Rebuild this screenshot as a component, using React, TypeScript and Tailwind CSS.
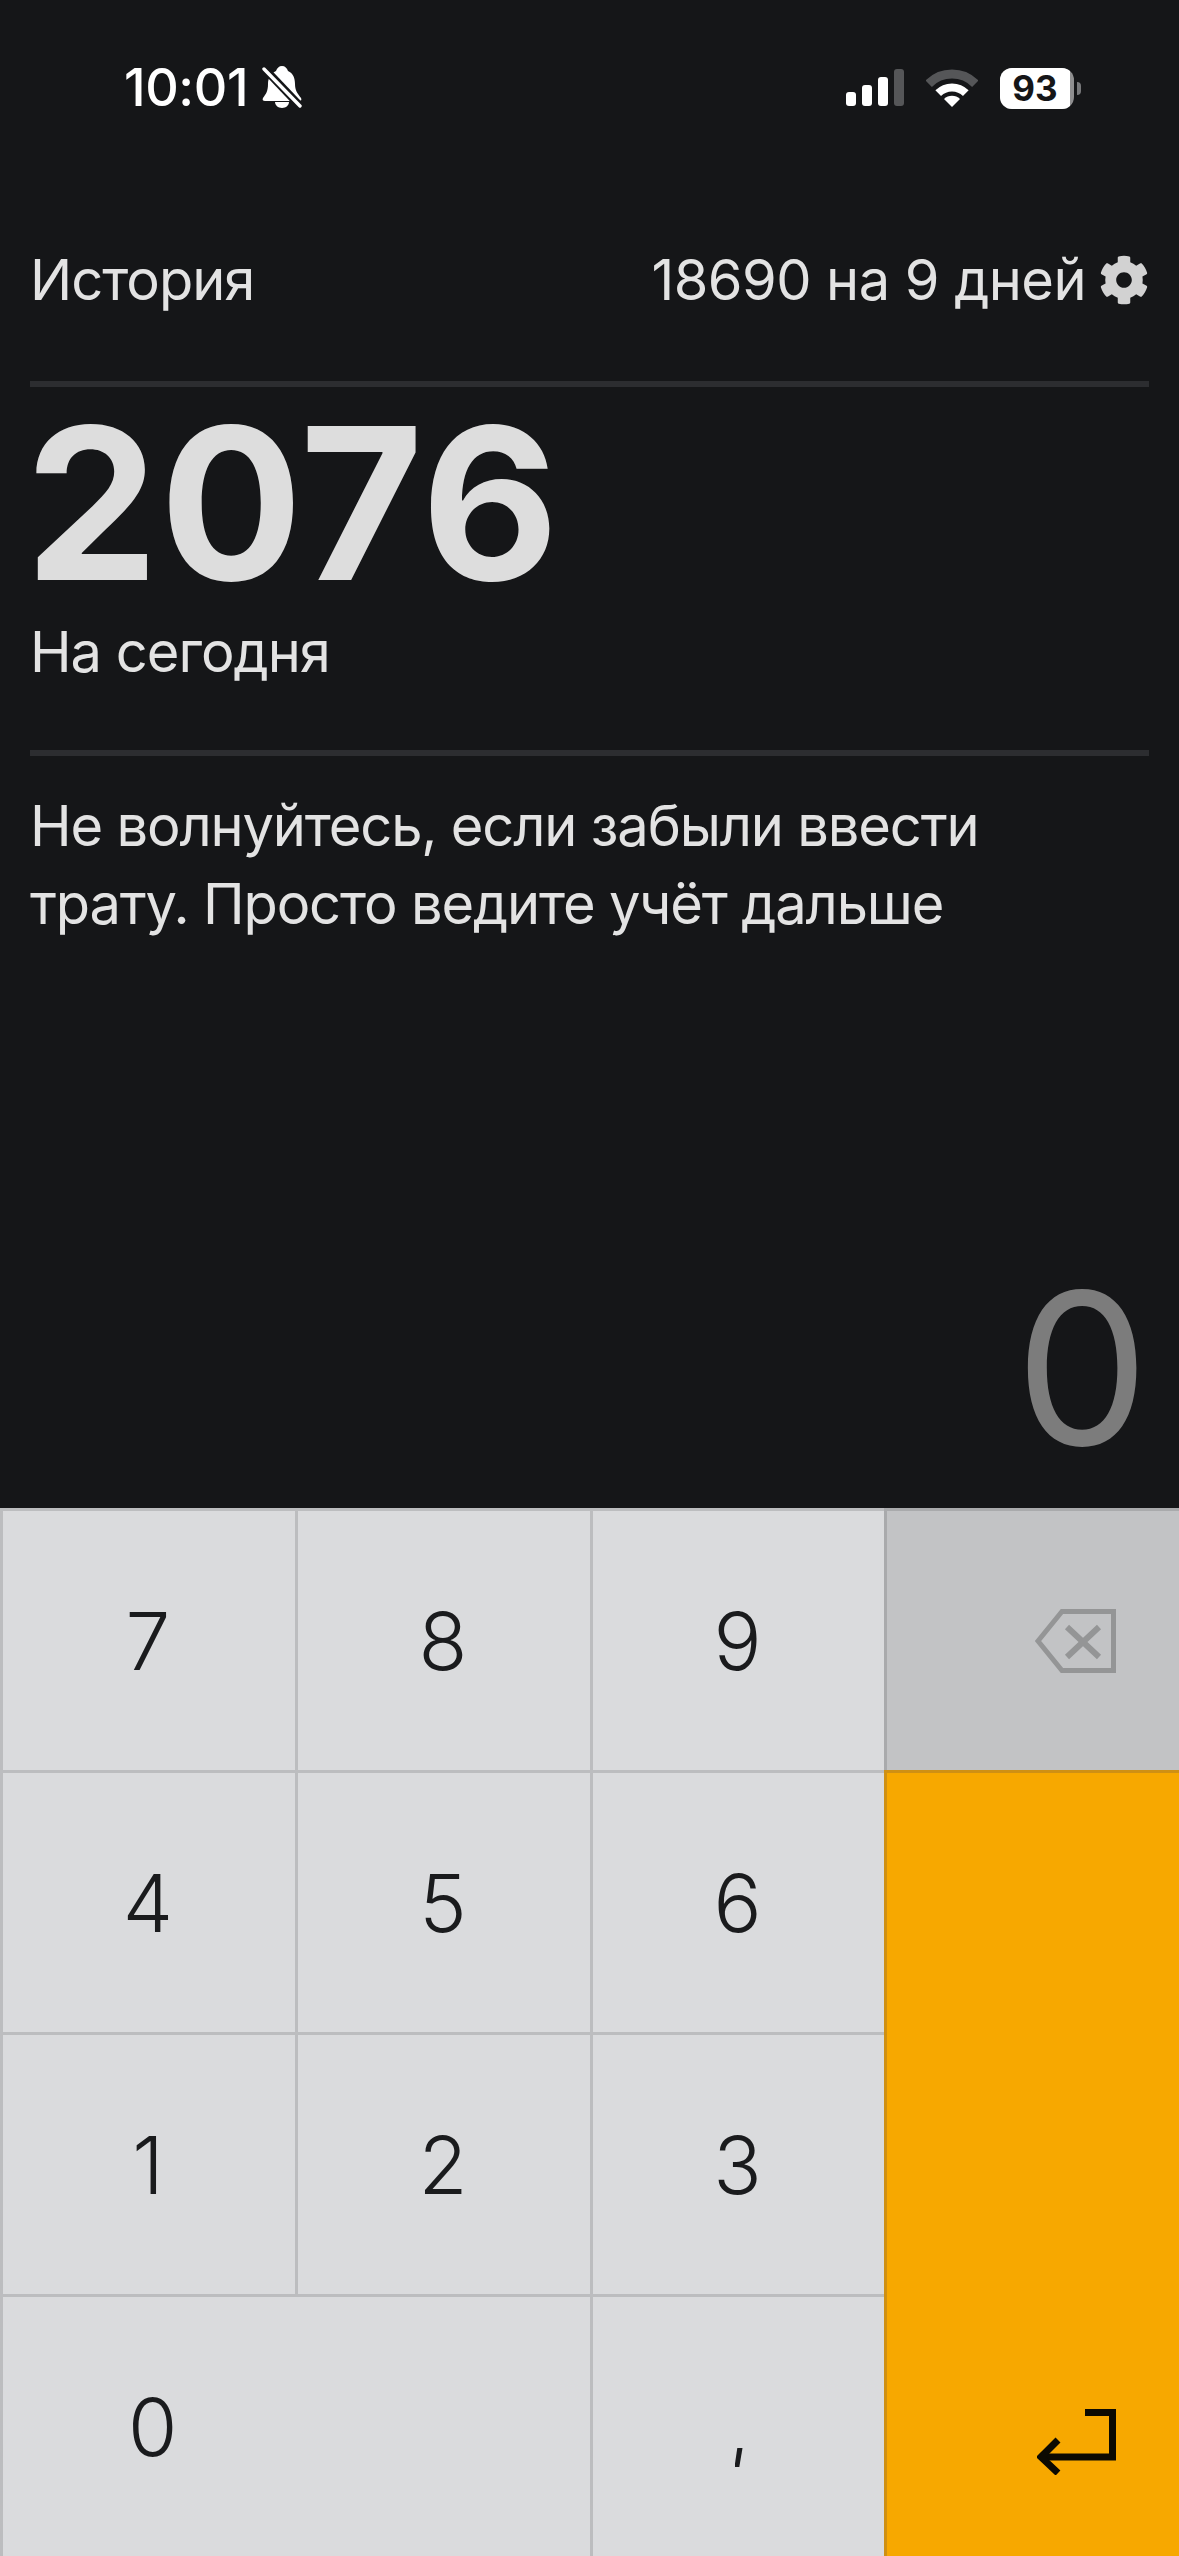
import React from "react";
import { FaCog } from "react-icons/fa";

const Key: React.FC<{ label: string; className?: string }> = ({ label, className = "border-r-[3px]" }) => (
  <div
    className={`flex items-center justify-center pr-[2px] bg-[#dadbdd] border-t-[3px] border-[#bcbdbf] text-[#1a1b1d] text-[80px] font-[350] leading-none ${className}`}
  >
    {label}
  </div>
);

const BellOff = () => (
  <svg width="40" height="42" viewBox="0 0 40 42" className="ml-[14px] mt-[-2px]">
    <path
      d="M20 0c3 0 5 2 6 5 5 2 7 7 7 13 0 6 2 9 6 14 1 2 0 3-2 3H3c-2 0-3-1-2-3 3-4 5-7 5-14 0-6 3-11 8-13 1-3 3-5 6-5z"
      fill="#fff"
    />
    <path d="M13 36h14c0 3-3 6-7 6s-7-3-7-6z" fill="#fff" />
    <path d="M-1 -1L39 41" stroke="#151618" strokeWidth="8" />
    <path d="M2 3L38 40" stroke="#fff" strokeWidth="3.4" strokeLinecap="round" />
  </svg>
);

const Signal = () => (
  <svg width="58" height="38" viewBox="0 0 58 38">
    <rect x="0" y="23" width="10" height="14" rx="3" fill="#fff" />
    <rect x="16" y="16" width="10" height="21" rx="3" fill="#fff" />
    <rect x="32" y="8" width="10" height="29" rx="3" fill="#fff" />
    <rect x="48" y="0" width="10" height="37" rx="3" fill="#555658" />
  </svg>
);

const Wifi = () => (
  <svg width="52" height="38" viewBox="0 0 52 38">
    <path d="M2.7 14.7A33 33 0 0 1 49.3 14.7" fill="none" stroke="#555658" strokeWidth="9" />
    <path d="M12.2 24.2A19.5 19.5 0 0 1 39.8 24.2" fill="none" stroke="#fff" strokeWidth="8" />
    <path d="M26 38L18 30A11.5 11.5 0 0 1 34 30Z" fill="#fff" />
  </svg>
);

const Battery = () => (
  <div className="flex items-center">
    <div className="w-[74px] h-[41px] rounded-[12px] overflow-hidden flex bg-[#8f8f90]">
      <div className="w-[70px] h-full bg-white flex items-center justify-center text-[#151618] text-[35px] font-bold leading-none">
        93
      </div>
    </div>
    <div className="w-[4px] h-[13px] ml-[3px] rounded-r-[4px] bg-[#77787a]" />
  </div>
);

const Backspace = () => (
  <svg width="81" height="64" viewBox="0 0 81 64" className="ml-[85px]">
    <path d="M3 32L27 2.5H78.5V61.5H27Z" fill="none" stroke="#949596" strokeWidth="5" />
    <path d="M32 18L64 48M64 18L32 48" stroke="#949596" strokeWidth="6" />
  </svg>
);

const Enter = () => (
  <svg width="80" height="66" viewBox="0 0 80 66">
    <path d="M48 3.5H75.5V48H5" fill="none" stroke="#0c0a02" strokeWidth="7" />
    <path d="M21 31L4 48L21 64" fill="none" stroke="#0c0a02" strokeWidth="7" />
  </svg>
);

export default function App() {
  return (
    <div
      className="w-[1179px] h-[2556px] bg-[#151618] flex flex-col overflow-hidden text-[#e3e3e3]"
      style={{ fontFamily: "Inter, 'Noto Sans', sans-serif" }}
    >
      <div className="h-[230px] flex items-start justify-between pt-[56px] pl-[124px] pr-[98px] shrink-0">
        <div className="flex items-center text-white text-[52px] font-medium leading-[64px] tracking-[-0.4px]">
          10:01
          <BellOff />
        </div>
        <div className="flex items-center gap-[22px] h-[64px]">
          <Signal />
          <Wifi />
          <Battery />
        </div>
      </div>

      <div className="h-[151px] shrink-0 flex items-start justify-between pl-[30px] pr-[30px] text-[56px] font-normal leading-[100px]">
        <span className="tracking-[-1px]">История</span>
        <span className="flex items-center tracking-[-0.55px]">
          18690 на 9 дней
          <FaCog className="w-[50px] h-[50px] ml-[13px] text-[#d2d2d2]" />
        </span>
      </div>

      <div className="h-[6px] mx-[30px] bg-[#2c2d30] shrink-0" />

      <div className="pl-[25px] text-[212px] font-bold leading-[216px] tracking-[1.3px] text-[#dddddd] shrink-0 mt-[8px]">
        2076
      </div>
      <div className="pl-[30px] text-[56px] font-normal leading-[80px] tracking-[-1px] shrink-0 mt-[1px]">
        На сегодня
      </div>

      <div className="h-[6px] mx-[30px] mt-[58px] bg-[#2c2d30] shrink-0" />

      <div className="pl-[30px] pr-[30px] mt-[31px] text-[56px] font-normal leading-[78px] tracking-[-1.15px] shrink-0">
        <div>Не волнуйтесь, если забыли ввести</div>
        <div>трату. Просто ведите учёт дальше</div>
      </div>

      <div className="flex-1 flex items-end justify-end pr-[30px] pb-[34px] text-[#7c7c7c] text-[212px] font-normal leading-none">
        0
      </div>

      <div className="h-[1048px] shrink-0 grid grid-cols-[298px_295px_291px_295px] grid-rows-[262px_262px_262px_262px]">
        <Key label="7" className="border-l-[3px] border-r-[3px]" />
        <Key label="8" />
        <Key label="9" className="" />
        <div className="flex items-center justify-center bg-[#c2c3c5] border-t-[3px] border-l-[3px] border-[#a9aaac]">
          <Backspace />
        </div>

        <Key label="4" className="border-l-[3px] border-r-[3px]" />
        <Key label="5" />
        <Key label="6" className="" />
        <div className="row-span-3 bg-[#f7a800] border-t-[3px] border-l-[3px] border-[#cf9013] flex items-end justify-center pb-[81px] pl-[88px]">
          <Enter />
        </div>

        <Key label="1" className="border-l-[3px] border-r-[3px]" />
        <Key label="2" />
        <Key label="3" className="" />

        <div className="col-span-2 flex items-center bg-[#dadbdd] border-t-[3px] border-l-[3px] border-r-[3px] border-[#bcbdbf] text-[#1a1b1d] text-[80px] font-[350] leading-none pl-[125px]">
          0
        </div>
        <div className="flex items-center justify-center bg-[#dadbdd] border-t-[3px] border-[#bcbdbf]">
          <span className="w-[8px] h-[19px] mt-[62px] bg-[#1a1b1d] [clip-path:polygon(35%_0,100%_0,60%_100%,0_100%)]" />
        </div>
      </div>
    </div>
  );
}
